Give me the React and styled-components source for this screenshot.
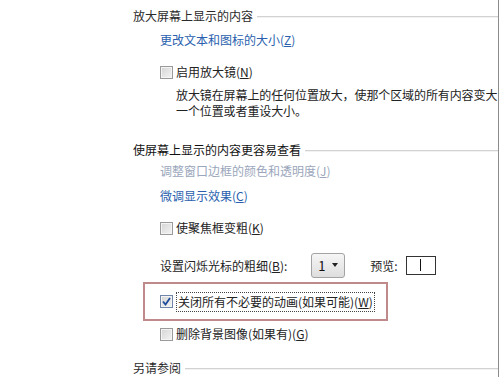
import React from "react";
import styled, { createGlobalStyle } from "styled-components";

const Global = createGlobalStyle`
  html, body { margin: 0; padding: 0; background: #fff; }
  body { font-family: "Noto Sans CJK SC", "Microsoft YaHei", sans-serif; font-size: 12px; color: #222; }
`;

const Window = styled.div`
  width: 499px;
  height: 377px;
  box-sizing: border-box;
  border-right: 1px solid #8c8c8c;
  overflow: hidden;
  padding: 8px 0 0 133px;
  background: #fff;
`;

const Heading = styled.div`
  display: flex;
  align-items: center;
  gap: 4px;
  height: 16px;
  line-height: 16px;
  margin-top: ${(p) => p.$mt || 0}px;
  color: ${(p) => (p.$strong ? "#111" : "#2a2a2a")};
  white-space: nowrap;
  &::after {
    content: "";
    flex: 1;
    height: 1px;
    background: #d2d2d2;
    box-shadow: 0 1px 0 #f2f2f2;
  }
`;

const Link = styled.div`
  margin: ${(p) => p.$mt || 0}px 0 0 27px;
  height: 16px;
  line-height: 16px;
  color: ${(p) => (p.$disabled ? "#9aa6bb" : "#2a5fae")};
  white-space: nowrap;
`;

const CheckRow = styled.div`
  display: flex;
  align-items: center;
  gap: 3px;
  height: 16px;
  line-height: 16px;
  margin: ${(p) => p.$mt || 0}px 0 0 ${(p) => (p.$flat ? 0 : 27)}px;
  white-space: nowrap;
`;

const Box = styled.span`
  width: 11px;
  height: 11px;
  flex: none;
  border: 1px solid ${(p) => (p.$checked ? "#6f86a8" : "#9a9a9a")};
  background: linear-gradient(135deg, #d4d4d4, #f4f4f4);
  display: flex;
  align-items: center;
  justify-content: center;
  box-shadow: inset 0 0 0 1px #f4f4f4;
`;

const Label = styled.span`
  padding: ${(p) => (p.$focus ? "1px 1px" : "0")};
  border: ${(p) => (p.$focus ? "1px dotted #444" : "none")};
`;

const Desc = styled.div`
  margin: 7px 0 0 43px;
  line-height: 16px;
  white-space: nowrap;
  letter-spacing: -0.1px;
  color: #222;
`;

const Annot = styled.div`
  margin: 5px 0 0 10px;
  width: 245px;
  height: 39px;
  box-sizing: border-box;
  border: 2px solid #c08a8a;
  display: flex;
  align-items: center;
  padding-left: 15px;
`;

const CursorRow = styled.div`
  display: flex;
  align-items: center;
  margin: 17px 0 0 27px;
  height: 24px;
  white-space: nowrap;
`;

const Select = styled.div`
  margin-left: 24px;
  width: 34px;
  height: 25px;
  box-sizing: border-box;
  border: 1px solid #a3a3a3;
  border-radius: 3px;
  background: linear-gradient(#f6f6f6, #dedede);
  display: flex;
  align-items: center;
  justify-content: space-between;
  padding: 0 6px 0 6px;
  font-size: 13px;
  color: #111;
`;

const Caret = styled.span`
  width: 0;
  height: 0;
  border-left: 3.5px solid transparent;
  border-right: 3.5px solid transparent;
  border-top: 4px solid #222;
`;

const PreviewLabel = styled.span`
  margin-left: 25px;
`;

const Preview = styled.div`
  margin-left: 8px;
  width: 30px;
  height: 19px;
  box-sizing: border-box;
  border: 1px solid #333;
  display: flex;
  align-items: center;
  justify-content: center;
  &::after {
    content: "";
    width: 1px;
    height: 12px;
    background: #111;
  }
`;

const Check = ({ checked }) => (
  <Box $checked={checked}>
    {checked && (
      <svg width="9" height="9" viewBox="0 0 9 9">
        <path d="M1 4.5 L3.5 7.5 L8 1" fill="none" stroke="#1d4c9c" strokeWidth="1.8" />
      </svg>
    )}
  </Box>
);

export default function App() {
  return (
    <>
      <Global />
      <Window>
        <Heading>放大屏幕上显示的内容</Heading>
        <Link $mt={8}>更改文本和图标的大小(<u>Z</u>)</Link>
        <CheckRow $mt={16}>
          <Check />
          <span>启用放大镜(<u>N</u>)</span>
        </CheckRow>
        <Desc>
          放大镜在屏幕上的任何位置放大，使那个区域的所有内容变大
          <br />
          一个位置或者重设大小。
        </Desc>
        <Heading $mt={23} $strong>使屏幕上显示的内容更容易查看</Heading>
        <Link $mt={5} $disabled>调整窗口边框的颜色和透明度(<u>J</u>)</Link>
        <Link $mt={9}>微调显示效果(<u>C</u>)</Link>
        <CheckRow $mt={16}>
          <Check />
          <span>使聚焦框变粗(<u>K</u>)</span>
        </CheckRow>
        <CursorRow>
          <span>设置闪烁光标的粗细(<u>B</u>):</span>
          <Select>
            <span>1</span>
            <Caret />
          </Select>
          <PreviewLabel>预览:</PreviewLabel>
          <Preview />
        </CursorRow>
        <Annot>
          <CheckRow $flat>
            <Check checked />
            <Label $focus>关闭所有不必要的动画(如果可能)(<u>W</u>)</Label>
          </CheckRow>
        </Annot>
        <CheckRow $mt={5}>
          <Check />
          <span>删除背景图像(如果有)(<u>G</u>)</span>
        </CheckRow>
        <Heading $mt={18}>另请参阅</Heading>
      </Window>
    </>
  );
}
